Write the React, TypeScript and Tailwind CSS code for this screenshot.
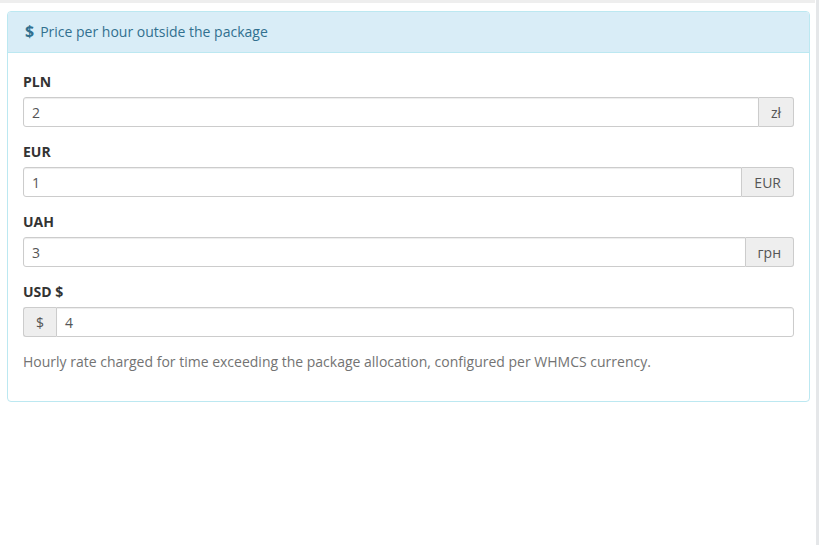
const rows = [
  { label: 'PLN', value: '2', addon: 'zł', side: 'right' },
  { label: 'EUR', value: '1', addon: 'EUR', side: 'right' },
  { label: 'UAH', value: '3', addon: 'грн', side: 'right' },
  { label: 'USD $', value: '4', addon: '$', side: 'left' },
];

function CurrencyInput({ value, addon, side }: { value: string; addon: string; side: string }) {
  const addonCls =
    'flex h-[30px] items-center border border-[#ccc] bg-[#eee] px-3 text-[14px] text-[#555]';
  return (
    <div className="flex h-[30px]">
      {side === 'left' && (
        <span className={addonCls + ' rounded-l-[3px] border-r-0 w-[33px] justify-center px-0'}>{addon}</span>
      )}
      <div
        className={
          'flex h-[30px] flex-1 items-center border border-[#ccc] bg-white px-[8px] text-[14px] text-[#555] shadow-[inset_0_1px_1px_rgba(0,0,0,0.075)] ' +
          (side === 'left' ? 'rounded-r-[3px]' : 'rounded-l-[3px]')
        }
      >
        {value}
      </div>
      {side === 'right' && (
        <span className={addonCls + ' rounded-r-[3px] border-l-0'}>{addon}</span>
      )}
    </div>
  );
}

export default function App() {
  return (
    <div className="flex h-[545px] w-[822px] bg-white font-['Open_Sans',sans-serif]">
      <div className="flex w-[816px] flex-col">
        <div className="h-[3px] w-[815px] bg-[#eeeeee]" />
        <div className="pl-[7px] pr-[6px] pt-[8px]">
          <div className="rounded-[4px] border border-[#bce8f1] bg-white">
            <div className="flex h-[41px] items-center gap-[6px] rounded-t-[3px] border-b border-[#bce8f1] bg-[#d9edf7] px-[17px] pb-[2px] text-[14px] text-[#31708f]">
              <span className="text-[16px] font-bold">$</span>
              <span>Price per hour outside the package</span>
            </div>
            <div className="px-[15px] pb-[29px] pt-[19px]">
              {rows.map((r) => (
                <div key={r.label} className="mb-[15px]">
                  <div className="mb-[5px] h-[20px] text-[14px] font-bold leading-[20px] text-[#333]">{r.label}</div>
                  <CurrencyInput value={r.value} addon={r.addon} side={r.side} />
                </div>
              ))}
              <p className="h-[20px] text-[14px] leading-[20px] text-[#737373]">
                Hourly rate charged for time exceeding the package allocation, configured per WHMCS currency.
              </p>
            </div>
          </div>
        </div>
      </div>
      <div className="h-full w-[3px] bg-[#e5e7e9]" />
    </div>
  );
}
